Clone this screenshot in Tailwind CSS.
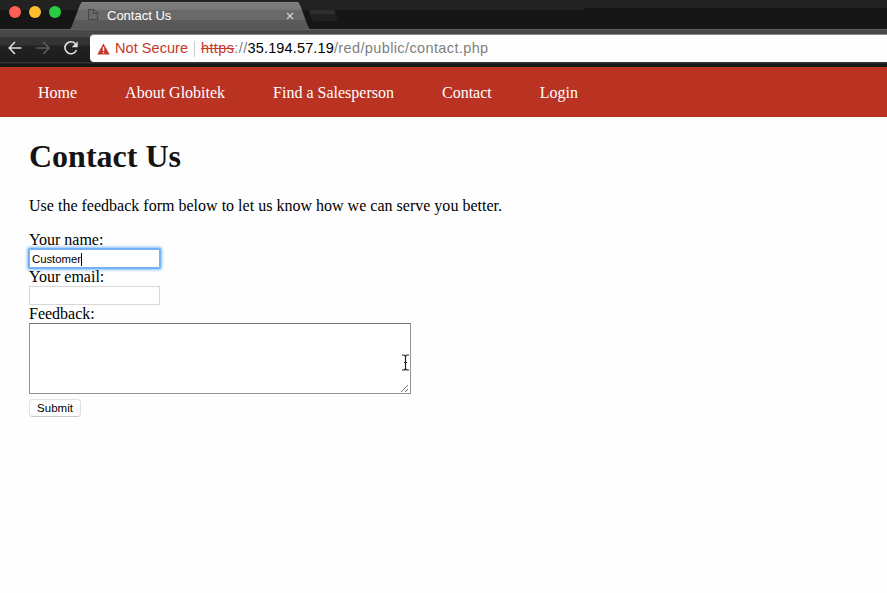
<!DOCTYPE html>
<html lang="en">
<head>
<meta charset="utf-8">
<title>Contact Us</title>
<script src="https://cdn.jsdelivr.net/npm/@tailwindcss/browser@4"></script>
</head>
<body class="h-[593px] w-[887px] overflow-hidden bg-[#fefefe] font-['Liberation_Serif',serif] text-base text-black">
<header class="font-['Liberation_Sans',sans-serif]">
  <div class="relative h-[29px] bg-[linear-gradient(#222_8px,#161616_8px)]">
    <svg class="absolute inset-0" width="887" height="29" viewBox="0 0 887 29">
      <defs><linearGradient id="tab" x1="0" y1="0" x2="0" y2="1">
        <stop offset="0" stop-color="#7c7c7c"/><stop offset=".31" stop-color="#777"/><stop offset=".31" stop-color="#696969"/><stop offset=".65" stop-color="#696969"/><stop offset=".65" stop-color="#5b5b5b"/><stop offset="1" stop-color="#565656"/>
      </linearGradient></defs>
      <path d="M0 8H584V10H0Z" fill="#222"/>
      <path d="M70 29C73 27 79 4 82 2H298C301 4 307 27 310 29Z" fill="url(#tab)"/>
      <path d="M83 2.500H297" stroke="#858585" fill="none"/>
      <path d="M309 10H333Q335 10 336 13L338 21H315Q312 21 311 18Z" fill="#202020"/>
      <path d="M309 10H333Q335 10 335 14H310Z" fill="#2f2f2f"/>
      <circle cx="15" cy="12" r="6" fill="#ff5f57"/><circle cx="35" cy="12" r="6" fill="#febc2f"/><circle cx="55" cy="12" r="6" fill="#28cb41"/>
      <path d="M88.500 9.500H94L97.500 13V19.500H88.500ZM93.500 9.500V13.500H97.500" fill="none" stroke="#464646"/>
      <path d="M287 13L293 19M293 13L287 19" stroke="#d2d2d2" stroke-width="1.200"/>
    </svg>
    <div class="relative ml-[107px] pt-2 text-[13px] leading-[16px] text-white">Contact Us</div>
  </div>
  <div class="flex h-[38px] items-start border-t border-[#5f5f5f] bg-[linear-gradient(#484848_5px,#454545_7px,#333_8px,#333_15px,#222_16px,#1b1b1b_32px,#303333_32px,#303333_33px,#161818_34px)] pt-[5px]">
    <svg class="shrink-0" width="90" height="27" viewBox="0 35 90 27" fill="none" stroke-width="1.600">
      <path d="M21.500 48H9.500M15 42L9.200 48L15 54" stroke="#dedede"/>
      <path d="M36.500 48H48.500M43.300 42L49.100 48L43.300 54" stroke="#5d5d5d"/>
      <path d="M75.800 44.200A6 6 0 1 0 76.500 50" stroke="#dedede"/>
      <path d="M77.700 41.200V47.200H71.700Z" fill="#dedede"/>
    </svg>
    <div class="-mt-px flex h-[28px] flex-1 items-center rounded-l-[4px] border-t border-[#858585] bg-[#fefefe] pl-[7px] text-[14.5px] leading-[18px]">
      <svg width="13" height="12" viewBox="0 0 13 12"><path d="M6.500 .5L12.700 11.500H.3Z" fill="#c5382a"/><path d="M6.500 4V8M6.500 9V10.300" stroke="#fff" stroke-width="1.400"/></svg>
      <span class="ml-[5px] w-[79px] whitespace-nowrap pb-px tracking-[0.05px] text-[#c5382a]">Not Secure</span>
      <span class="h-4 w-px bg-[#ccc]"></span>
      <span class="ml-[6px] whitespace-nowrap pb-px tracking-[0.38px] text-[#7f7f7f]"><span class="text-[#c5382a] line-through">https</span>://<span class="tracking-[0.14px] text-black">35.194.57.19</span>/red/public/contact.php</span>
    </div>
  </div>
</header>
<nav class="flex h-[50px] items-center gap-12 bg-[#ba3222] pt-px pl-[38px] text-white">
  <a>Home</a><a>About Globitek</a><a>Find a Salesperson</a><a>Contact</a><a>Login</a>
</nav>
<main class="px-[29px] pt-[21px]">
  <h1 class="text-[32px] leading-[37px] font-bold text-[#141414]">Contact Us</h1>
  <p class="mt-[21px] leading-[20px] tracking-[0.01px]">Use the feedback form below to let us know how we can serve you better.</p>
  <form class="mt-[15px] flex flex-col items-start">
    <label class="h-[18px] leading-[18px]">Your name:</label>
    <div class="flex h-[19px] w-[131px] items-center rounded-[1px] bg-white pt-px pl-[3px] font-['Liberation_Sans',sans-serif] text-[11.3px] shadow-[0_0_0_1px_#75b2f5,0_0_3px_1.500px_#85bcf8,inset_0_0_0_1px_#75b2f5]">Customer<span class="h-[13px] w-px bg-black"></span></div>
    <label class="h-[18px] leading-[18px]">Your email:</label>
    <div class="h-[19px] w-[131px] border border-[#d8d8d8] bg-white"></div>
    <label class="h-[18px] leading-[18px]">Feedback:</label>
    <div class="relative h-[71px] w-[382px] border border-[#929292] border-t-[#777] bg-white">
      <svg class="absolute right-0 bottom-0" width="10" height="10" viewBox="0 0 10 10"><path d="M1 9L8 2M5 9L8 6" stroke="#777" fill="none"/></svg>
      <svg class="absolute top-[30px] left-[371px]" width="9" height="17" viewBox="0 0 9 17"><path d="M1 1H2.500Q4.500 1 4.500 3V14Q4.500 16 2.500 16H1M8 1H6.500Q4.500 1 4.500 3M4.500 14Q4.500 16 6.500 16H8M3 8.500H6" stroke="#222" fill="none" stroke-width="1.200"/></svg>
    </div>
    <div class="mt-[5px] flex h-[18px] w-[52px] items-center justify-center rounded-[4px] border border-[#e0e0e0] border-b-[#cacaca] bg-white pt-px font-['Liberation_Sans',sans-serif] text-[11.500px]">Submit</div>
  </form>
</main>
</body>
</html>
